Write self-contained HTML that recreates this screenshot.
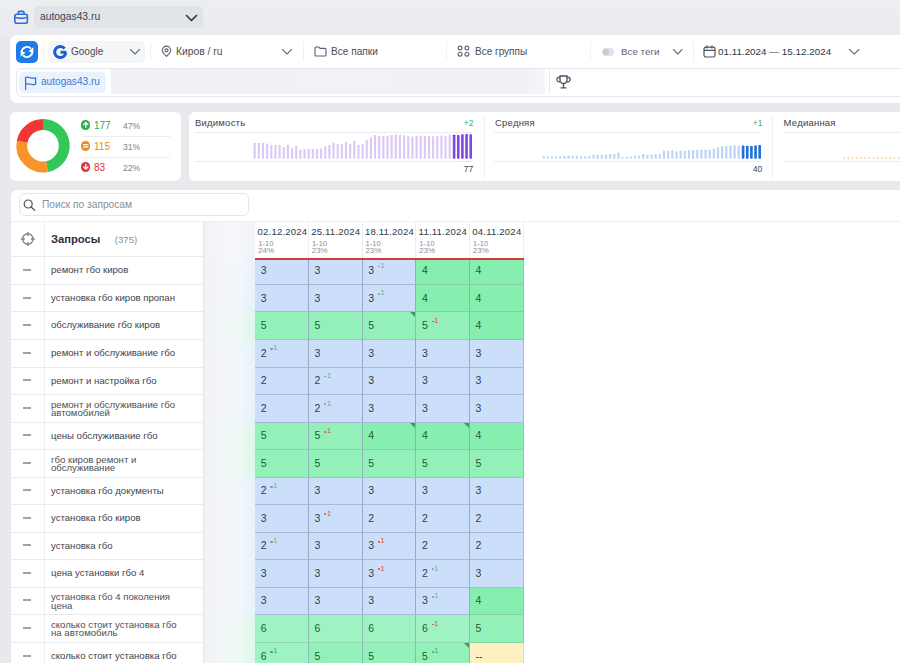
<!DOCTYPE html><html><head><meta charset="utf-8"><style>
*{margin:0;padding:0;box-sizing:border-box}
html,body{width:900px;height:663px;overflow:hidden;background:#e7e9ed;font-family:"Liberation Sans",sans-serif;color:#3c4350}
.a{position:absolute}
.t{position:absolute;white-space:nowrap;line-height:1}
svg{position:absolute;overflow:visible}
</style></head><body><div class="a" style="left:0;top:0;width:900px;height:36px;background:linear-gradient(180deg,#eceef1,#e9ebee)"></div>
<svg style="left:13px;top:10px" width="16" height="15" viewBox="0 0 16 15"><rect x="1.8" y="4.3" width="12.6" height="9.0" rx="2" fill="none" stroke="#2f6fdc" stroke-width="1.6"/><path d="M5.3 4.2 V2.4 Q5.3 1.4 6.3 1.4 H10 Q11 1.4 11 2.4 V4.2" fill="none" stroke="#2f6fdc" stroke-width="1.6"/><path d="M2 7.6 Q8.1 9.2 14.2 7.6" fill="none" stroke="#2f6fdc" stroke-width="1.6"/></svg>
<div class="a" style="left:34px;top:6px;width:169px;height:22px;background:#e0e3e8;border-radius:5px"></div>
<div class="t" style="left:40px;top:11.68px;font-size:10.3px;color:#3d4450;font-weight:normal;">autogas43.ru</div>
<svg style="left:186px;top:14.5px" width="11" height="6" viewBox="0 0 11 6"><path d="M0.5 0.5 L5.5 5.5 L10.5 0.5" fill="none" stroke="#2d3440" stroke-width="1.6" stroke-linecap="round" stroke-linejoin="round"/></svg>
<div class="a" style="left:10px;top:35px;width:900px;height:67.5px;background:#ffffff;border-radius:7px"></div>
<div class="a" style="left:16px;top:40.5px;width:22px;height:22px;background:#1f7bea;border-radius:5px"></div>
<svg style="left:16px;top:40.5px" width="22" height="22" viewBox="0 0 22 22"><path d="M5.6 11.2 A5.4 5.4 0 0 1 14.9 7.6" fill="none" stroke="#fff" stroke-width="1.9"/><path d="M12.4 10.4 L17.4 6.2 L17.2 11.4 Z" fill="#fff"/><path d="M16.4 10.8 A5.4 5.4 0 0 1 7.1 14.4" fill="none" stroke="#fff" stroke-width="1.9"/><path d="M9.6 11.6 L4.6 15.8 L4.8 10.6 Z" fill="#fff"/></svg>
<div class="a" style="left:43px;top:42px;width:1px;height:19px;background:#f0f1f4;"></div>
<div class="a" style="left:150px;top:42px;width:1px;height:19px;background:#f0f1f4;"></div>
<div class="a" style="left:303px;top:42px;width:1px;height:19px;background:#f0f1f4;"></div>
<div class="a" style="left:446px;top:42px;width:1px;height:19px;background:#f0f1f4;"></div>
<div class="a" style="left:590px;top:42px;width:1px;height:19px;background:#f0f1f4;"></div>
<div class="a" style="left:693px;top:42px;width:1px;height:19px;background:#f0f1f4;"></div>
<div class="a" style="left:48px;top:41px;width:97px;height:21.5px;background:#f4f5f7;border-radius:6px"></div>
<svg style="left:53px;top:44.5px" width="14.5" height="14.5" viewBox="0 0 14 14"><path d="M11.2 3.3 A5.4 5.4 0 1 0 12.4 7.4" fill="none" stroke="#1a5fd0" stroke-width="2.9"/><path d="M7.2 7 H12.9" fill="none" stroke="#1a5fd0" stroke-width="2.8"/></svg>
<div class="t" style="left:71px;top:46.95px;font-size:10px;color:#474d56;font-weight:normal;">Google</div>
<svg style="left:130px;top:49px" width="10" height="5.5" viewBox="0 0 10 5.5"><path d="M0.5 0.5 L5.0 5.0 L9.5 0.5" fill="none" stroke="#6b7280" stroke-width="1.1" stroke-linecap="round" stroke-linejoin="round"/></svg>
<svg style="left:161px;top:45.5px" width="11" height="11" viewBox="0 0 11 11"><path d="M5.5 10.4 C5.5 10.4 1.3 6.6 1.3 4.3 A4.2 4.2 0 0 1 9.7 4.3 C9.7 6.6 5.5 10.4 5.5 10.4 Z" fill="none" stroke="#5a6270" stroke-width="1.1"/><circle cx="5.5" cy="4.4" r="1.5" fill="none" stroke="#5a6270" stroke-width="1.1"/></svg>
<div class="t" style="left:176px;top:46.68px;font-size:10.3px;color:#474d56;font-weight:normal;">Киров / ru</div>
<svg style="left:282px;top:49px" width="10" height="5.5" viewBox="0 0 10 5.5"><path d="M0.5 0.5 L5.0 5.0 L9.5 0.5" fill="none" stroke="#6b7280" stroke-width="1.1" stroke-linecap="round" stroke-linejoin="round"/></svg>
<svg style="left:313.5px;top:45.5px" width="13" height="11" viewBox="0 0 13 11"><path d="M1 2 Q1 1 2 1 H4.8 L6.2 2.4 H11 Q12 2.4 12 3.4 V9 Q12 10 11 10 H2 Q1 10 1 9 Z" fill="none" stroke="#5a6270" stroke-width="1.1"/></svg>
<div class="t" style="left:331px;top:46.86px;font-size:10.1px;color:#474d56;font-weight:normal;">Все папки</div>
<svg style="left:456.5px;top:44.5px" width="13" height="12" viewBox="0 0 13 12"><circle cx="3.1" cy="3.1" r="1.95" fill="none" stroke="#5a6270" stroke-width="1.1"/><circle cx="9.9" cy="3.1" r="1.95" fill="none" stroke="#5a6270" stroke-width="1.1"/><circle cx="3.1" cy="9.2" r="1.95" fill="none" stroke="#5a6270" stroke-width="1.1"/><circle cx="9.9" cy="9.2" r="1.95" fill="none" stroke="#5a6270" stroke-width="1.1"/></svg>
<div class="t" style="left:475px;top:46.95px;font-size:10px;color:#474d56;font-weight:normal;">Все группы</div>
<div class="a" style="left:602px;top:48px;width:12px;height:8px;background:#dfe1e5;border-radius:4px"></div>
<div class="a" style="left:603px;top:49px;width:6px;height:6px;border-radius:3px;background:#c9ccd2"></div>
<div class="t" style="left:621px;top:47.13px;font-size:9.8px;color:#5d6470;font-weight:normal;">Все теги</div>
<svg style="left:673px;top:49px" width="9.5" height="5.5" viewBox="0 0 9.5 5.5"><path d="M0.5 0.5 L4.75 5.0 L9.0 0.5" fill="none" stroke="#6b7280" stroke-width="1.1" stroke-linecap="round" stroke-linejoin="round"/></svg>
<svg style="left:702.5px;top:44.5px" width="13" height="13" viewBox="0 0 13 13"><rect x="1" y="2.2" width="11" height="9.8" rx="1.8" fill="none" stroke="#4a5260" stroke-width="1.2"/><path d="M1 5.4 H12 M4 0.6 V3.4 M9 0.6 V3.4" stroke="#4a5260" stroke-width="1.2" fill="none"/></svg>
<div class="t" style="left:718px;top:47.09px;font-size:9.85px;color:#2f3642;font-weight:normal;">01.11.2024 — 15.12.2024</div>
<svg style="left:849px;top:49px" width="10.5" height="5.5" viewBox="0 0 10.5 5.5"><path d="M0.5 0.5 L5.25 5.0 L10.0 0.5" fill="none" stroke="#6b7280" stroke-width="1.1" stroke-linecap="round" stroke-linejoin="round"/></svg>
<div class="a" style="left:16px;top:68px;width:900px;height:28.5px;border:1px solid #e4e7eb;border-radius:6px"></div>
<div class="a" style="left:19px;top:71.5px;width:87px;height:21px;background:#eaf2fd;border-radius:5px"></div>
<svg style="left:23.5px;top:75.5px" width="13" height="14" viewBox="0 0 13 14"><path d="M1.6 13.4 V1.6 C4.6 -0.2 7.6 3.6 11.6 1.8 V8.2 C7.6 10 4.6 6.6 1.6 8.2" fill="none" stroke="#3d78d8" stroke-width="1.3" stroke-linejoin="round" stroke-linecap="round"/></svg>
<div class="t" style="left:41px;top:76.86px;font-size:10.1px;color:#3b78dc;font-weight:normal;">autogas43.ru</div>
<div class="a" style="left:111px;top:69px;width:434px;height:24.5px;background:linear-gradient(90deg,#eef0f3,#f1f2f5 50%,#eff1f4 95%,#f6f7f9)"></div>
<div class="a" style="left:549px;top:70px;width:1px;height:24px;background:#e6e8ec;"></div>
<svg style="left:555.8px;top:74.6px" width="15" height="14" viewBox="0 0 15 14"><path d="M4 1 H11 V5 A3.5 3.5 0 0 1 4 5 Z" fill="none" stroke="#4a5260" stroke-width="1.3"/><path d="M4 2.4 H2.2 A2 2 0 0 0 4.2 6.6 M11 2.4 H12.8 A2 2 0 0 1 10.8 6.6" fill="none" stroke="#4a5260" stroke-width="1.2"/><path d="M7.5 8.5 V12.5 M4.5 12.8 H10.5" stroke="#4a5260" stroke-width="1.3" fill="none"/></svg>
<div class="a" style="left:10px;top:112px;width:170.5px;height:69px;background:#ffffff;border-radius:6px"></div>
<svg style="left:0;top:0" width="900" height="663"><path d="M43.00 124.45 A21.25 21.25 0 0 1 46.98 166.57" fill="none" stroke="#34c658" stroke-width="10.9"/><path d="M46.98 166.57 A21.25 21.25 0 0 1 22.13 141.72" fill="none" stroke="#f8952a" stroke-width="10.9"/><path d="M22.13 141.72 A21.25 21.25 0 0 1 43.00 124.45" fill="none" stroke="#f23636" stroke-width="10.9"/></svg>
<div class="a" style="left:80.8px;top:120.2px;width:9.6px;height:9.6px;border-radius:50%;background:#2faa50"></div>
<svg style="left:80.8px;top:120.2px" width="9.6" height="9.6" viewBox="0 0 10 10"><path d="M5 7.6 V2.8 M2.8 4.8 L5 2.6 L7.2 4.8" fill="none" stroke="#fff" stroke-width="1.4" stroke-linecap="round" stroke-linejoin="round"/></svg>
<div class="t" style="left:94px;top:121.15px;font-size:10px;color:#2faa50;font-weight:normal;">177</div>
<div class="t" style="left:123px;top:122.42px;font-size:8.6px;color:#7d838d;font-weight:normal;">47%</div>
<div class="a" style="left:80.8px;top:141.2px;width:9.6px;height:9.6px;border-radius:50%;background:#ee8c1f"></div>
<svg style="left:80.8px;top:141.2px" width="9.6" height="9.6" viewBox="0 0 10 10"><path d="M2.8 3.9 H7.2 M2.8 6.1 H7.2" fill="none" stroke="#fff" stroke-width="1.3" stroke-linecap="round"/></svg>
<div class="t" style="left:94px;top:142.15px;font-size:10px;color:#ee8c1f;font-weight:normal;">115</div>
<div class="t" style="left:123px;top:143.42px;font-size:8.6px;color:#7d838d;font-weight:normal;">31%</div>
<div class="a" style="left:80.8px;top:162.2px;width:9.6px;height:9.6px;border-radius:50%;background:#e0343a"></div>
<svg style="left:80.8px;top:162.2px" width="9.6" height="9.6" viewBox="0 0 10 10"><path d="M5 2.4 V7.2 M2.8 5.2 L5 7.4 L7.2 5.2" fill="none" stroke="#fff" stroke-width="1.4" stroke-linecap="round" stroke-linejoin="round"/></svg>
<div class="t" style="left:94px;top:163.15px;font-size:10px;color:#e0343a;font-weight:normal;">83</div>
<div class="t" style="left:123px;top:164.42px;font-size:8.6px;color:#7d838d;font-weight:normal;">22%</div>
<div class="a" style="left:82px;top:135.5px;width:88px;height:1px;background:#eaecef;"></div>
<div class="a" style="left:82px;top:157px;width:88px;height:1px;background:#eaecef;"></div>
<div class="a" style="left:189px;top:112px;width:720px;height:69px;background:#ffffff;border-radius:6px"></div>
<div class="t" style="left:195px;top:118.10px;font-size:9.5px;color:#3c4148;font-weight:normal;letter-spacing:0.22px">Видимость</div>
<div class="a" style="left:194px;top:131.5px;width:278.3px;height:1px;background:#e9ebee;"></div>
<div class="a" style="left:194px;top:160.5px;width:278.3px;height:1px;background:#e9ebee;"></div>
<svg style="left:0;top:0" width="900" height="663"><rect x="253.60" y="142.70" width="2.2" height="16" rx="0.6" fill="#dccaf6"/><rect x="257.75" y="142.70" width="2.2" height="16" rx="0.6" fill="#dccaf6"/><rect x="261.90" y="142.70" width="2.2" height="16" rx="0.6" fill="#dccaf6"/><rect x="266.05" y="143.60" width="2.2" height="15.1" rx="0.6" fill="#dccaf6"/><rect x="270.20" y="145.00" width="2.2" height="13.7" rx="0.6" fill="#dccaf6"/><rect x="274.35" y="145.00" width="2.2" height="13.7" rx="0.6" fill="#dccaf6"/><rect x="278.50" y="145.00" width="2.2" height="13.7" rx="0.6" fill="#dccaf6"/><rect x="282.65" y="146.70" width="2.2" height="12" rx="0.6" fill="#dccaf6"/><rect x="286.80" y="144.40" width="2.2" height="14.3" rx="0.6" fill="#dccaf6"/><rect x="290.95" y="147.40" width="2.2" height="11.3" rx="0.6" fill="#dccaf6"/><rect x="295.10" y="145.40" width="2.2" height="13.3" rx="0.6" fill="#dccaf6"/><rect x="299.25" y="149.70" width="2.2" height="9" rx="0.6" fill="#dccaf6"/><rect x="303.40" y="149.00" width="2.2" height="9.7" rx="0.6" fill="#dccaf6"/><rect x="307.55" y="148.70" width="2.2" height="10" rx="0.6" fill="#dccaf6"/><rect x="311.70" y="148.70" width="2.2" height="10" rx="0.6" fill="#dccaf6"/><rect x="315.85" y="148.70" width="2.2" height="10" rx="0.6" fill="#dccaf6"/><rect x="320.00" y="148.40" width="2.2" height="10.3" rx="0.6" fill="#dccaf6"/><rect x="324.15" y="146.30" width="2.2" height="12.4" rx="0.6" fill="#dccaf6"/><rect x="328.30" y="145.00" width="2.2" height="13.7" rx="0.6" fill="#dccaf6"/><rect x="332.45" y="142.30" width="2.2" height="16.4" rx="0.6" fill="#dccaf6"/><rect x="336.60" y="144.00" width="2.2" height="14.7" rx="0.6" fill="#dccaf6"/><rect x="340.75" y="143.40" width="2.2" height="15.3" rx="0.6" fill="#dccaf6"/><rect x="344.90" y="142.00" width="2.2" height="16.7" rx="0.6" fill="#dccaf6"/><rect x="349.05" y="143.70" width="2.2" height="15" rx="0.6" fill="#dccaf6"/><rect x="353.20" y="140.70" width="2.2" height="18" rx="0.6" fill="#dccaf6"/><rect x="357.35" y="145.00" width="2.2" height="13.7" rx="0.6" fill="#dccaf6"/><rect x="361.50" y="144.00" width="2.2" height="14.7" rx="0.6" fill="#dccaf6"/><rect x="365.65" y="139.70" width="2.2" height="19" rx="0.6" fill="#dccaf6"/><rect x="369.80" y="137.40" width="2.2" height="21.3" rx="0.6" fill="#dccaf6"/><rect x="373.95" y="135.10" width="2.2" height="23.6" rx="0.6" fill="#dccaf6"/><rect x="378.10" y="136.00" width="2.2" height="22.7" rx="0.6" fill="#dccaf6"/><rect x="382.25" y="136.00" width="2.2" height="22.7" rx="0.6" fill="#dccaf6"/><rect x="386.40" y="135.70" width="2.2" height="23" rx="0.6" fill="#dccaf6"/><rect x="390.55" y="135.10" width="2.2" height="23.6" rx="0.6" fill="#dccaf6"/><rect x="394.70" y="134.40" width="2.2" height="24.3" rx="0.6" fill="#dccaf6"/><rect x="398.85" y="134.70" width="2.2" height="24" rx="0.6" fill="#dccaf6"/><rect x="403.00" y="135.10" width="2.2" height="23.6" rx="0.6" fill="#dccaf6"/><rect x="407.15" y="136.00" width="2.2" height="22.7" rx="0.6" fill="#dccaf6"/><rect x="411.30" y="136.40" width="2.2" height="22.3" rx="0.6" fill="#dccaf6"/><rect x="415.45" y="136.00" width="2.2" height="22.7" rx="0.6" fill="#dccaf6"/><rect x="419.60" y="135.40" width="2.2" height="23.3" rx="0.6" fill="#dccaf6"/><rect x="423.75" y="136.00" width="2.2" height="22.7" rx="0.6" fill="#dccaf6"/><rect x="427.90" y="136.00" width="2.2" height="22.7" rx="0.6" fill="#dccaf6"/><rect x="432.05" y="136.30" width="2.2" height="22.4" rx="0.6" fill="#dccaf6"/><rect x="436.20" y="136.00" width="2.2" height="22.7" rx="0.6" fill="#dccaf6"/><rect x="440.35" y="135.40" width="2.2" height="23.3" rx="0.6" fill="#dccaf6"/><rect x="444.50" y="136.00" width="2.2" height="22.7" rx="0.6" fill="#dccaf6"/><rect x="448.65" y="134.40" width="2.2" height="24.3" rx="0.6" fill="#dccaf6"/><rect x="452.80" y="134.70" width="2.6" height="24" rx="0.6" fill="#8045e3"/><rect x="456.95" y="135.10" width="2.6" height="23.6" rx="0.6" fill="#8045e3"/><rect x="461.10" y="134.30" width="2.6" height="24.4" rx="0.6" fill="#8045e3"/><rect x="465.25" y="134.00" width="2.6" height="24.7" rx="0.6" fill="#8045e3"/><rect x="469.40" y="134.30" width="2.6" height="24.4" rx="0.6" fill="#8045e3"/></svg>
<div class="t" style="left:463.7px;top:118.71px;font-size:8.5px;color:#3bb561;font-weight:normal;">+2</div>
<div class="t" style="left:463.7px;top:165.02px;font-size:8.6px;color:#3c4350;font-weight:normal;">77</div>
<div class="a" style="left:483.5px;top:115px;width:1px;height:63px;background:#eceef1;"></div>
<div class="t" style="left:495px;top:118.10px;font-size:9.5px;color:#3c4148;font-weight:normal;letter-spacing:0.22px">Средняя</div>
<div class="a" style="left:494px;top:131.5px;width:267.29999999999995px;height:1px;background:#e9ebee;"></div>
<div class="a" style="left:494px;top:160.5px;width:267.29999999999995px;height:1px;background:#e9ebee;"></div>
<svg style="left:0;top:0" width="900" height="663"><rect x="542.60" y="156.20" width="2.2" height="2.5" rx="0.6" fill="#bdd5f5"/><rect x="546.75" y="156.20" width="2.2" height="2.5" rx="0.6" fill="#bdd5f5"/><rect x="550.90" y="156.20" width="2.2" height="2.5" rx="0.6" fill="#bdd5f5"/><rect x="555.05" y="156.20" width="2.2" height="2.5" rx="0.6" fill="#bdd5f5"/><rect x="559.20" y="156.20" width="2.2" height="2.5" rx="0.6" fill="#bdd5f5"/><rect x="563.35" y="155.70" width="2.2" height="3" rx="0.6" fill="#bdd5f5"/><rect x="567.50" y="155.70" width="2.2" height="3" rx="0.6" fill="#bdd5f5"/><rect x="571.65" y="155.70" width="2.2" height="3" rx="0.6" fill="#bdd5f5"/><rect x="575.80" y="155.70" width="2.2" height="3" rx="0.6" fill="#bdd5f5"/><rect x="579.95" y="156.20" width="2.2" height="2.5" rx="0.6" fill="#bdd5f5"/><rect x="584.10" y="156.20" width="2.2" height="2.5" rx="0.6" fill="#bdd5f5"/><rect x="588.25" y="156.20" width="2.2" height="2.5" rx="0.6" fill="#bdd5f5"/><rect x="592.40" y="154.70" width="2.2" height="4" rx="0.6" fill="#bdd5f5"/><rect x="596.55" y="154.70" width="2.2" height="4" rx="0.6" fill="#bdd5f5"/><rect x="600.70" y="154.70" width="2.2" height="4" rx="0.6" fill="#bdd5f5"/><rect x="604.85" y="154.70" width="2.2" height="4" rx="0.6" fill="#bdd5f5"/><rect x="609.00" y="154.00" width="2.2" height="4.7" rx="0.6" fill="#bdd5f5"/><rect x="613.15" y="154.00" width="2.2" height="4.7" rx="0.6" fill="#bdd5f5"/><rect x="617.30" y="152.70" width="2.2" height="6" rx="0.6" fill="#bdd5f5"/><rect x="621.45" y="156.70" width="2.2" height="2" rx="0.6" fill="#bdd5f5"/><rect x="625.60" y="156.70" width="2.2" height="2" rx="0.6" fill="#bdd5f5"/><rect x="629.75" y="156.40" width="2.2" height="2.3" rx="0.6" fill="#bdd5f5"/><rect x="633.90" y="155.40" width="2.2" height="3.3" rx="0.6" fill="#bdd5f5"/><rect x="638.05" y="155.40" width="2.2" height="3.3" rx="0.6" fill="#bdd5f5"/><rect x="642.20" y="154.00" width="2.2" height="4.7" rx="0.6" fill="#bdd5f5"/><rect x="646.35" y="154.70" width="2.2" height="4" rx="0.6" fill="#bdd5f5"/><rect x="650.50" y="154.70" width="2.2" height="4" rx="0.6" fill="#bdd5f5"/><rect x="654.65" y="154.00" width="2.2" height="4.7" rx="0.6" fill="#bdd5f5"/><rect x="658.80" y="154.00" width="2.2" height="4.7" rx="0.6" fill="#bdd5f5"/><rect x="662.95" y="150.30" width="2.2" height="8.4" rx="0.6" fill="#bdd5f5"/><rect x="667.10" y="150.70" width="2.2" height="8" rx="0.6" fill="#bdd5f5"/><rect x="671.25" y="150.30" width="2.2" height="8.4" rx="0.6" fill="#bdd5f5"/><rect x="675.40" y="151.40" width="2.2" height="7.3" rx="0.6" fill="#bdd5f5"/><rect x="679.55" y="150.70" width="2.2" height="8" rx="0.6" fill="#bdd5f5"/><rect x="683.70" y="150.70" width="2.2" height="8" rx="0.6" fill="#bdd5f5"/><rect x="687.85" y="150.00" width="2.2" height="8.7" rx="0.6" fill="#bdd5f5"/><rect x="692.00" y="150.00" width="2.2" height="8.7" rx="0.6" fill="#bdd5f5"/><rect x="696.15" y="149.70" width="2.2" height="9" rx="0.6" fill="#bdd5f5"/><rect x="700.30" y="149.40" width="2.2" height="9.3" rx="0.6" fill="#bdd5f5"/><rect x="704.45" y="149.70" width="2.2" height="9" rx="0.6" fill="#bdd5f5"/><rect x="708.60" y="149.40" width="2.2" height="9.3" rx="0.6" fill="#bdd5f5"/><rect x="712.75" y="148.70" width="2.2" height="10" rx="0.6" fill="#bdd5f5"/><rect x="716.90" y="147.40" width="2.2" height="11.3" rx="0.6" fill="#bdd5f5"/><rect x="721.05" y="146.00" width="2.2" height="12.7" rx="0.6" fill="#bdd5f5"/><rect x="725.20" y="146.00" width="2.2" height="12.7" rx="0.6" fill="#bdd5f5"/><rect x="729.35" y="145.70" width="2.2" height="13" rx="0.6" fill="#bdd5f5"/><rect x="733.50" y="145.00" width="2.2" height="13.7" rx="0.6" fill="#bdd5f5"/><rect x="737.65" y="145.40" width="2.2" height="13.3" rx="0.6" fill="#bdd5f5"/><rect x="741.80" y="145.40" width="2.6" height="13.3" rx="0.6" fill="#1f6fdc"/><rect x="745.95" y="145.70" width="2.6" height="13" rx="0.6" fill="#1f6fdc"/><rect x="750.10" y="146.00" width="2.6" height="12.7" rx="0.6" fill="#1f6fdc"/><rect x="754.25" y="145.40" width="2.6" height="13.3" rx="0.6" fill="#1f6fdc"/><rect x="758.40" y="145.00" width="2.6" height="13.7" rx="0.6" fill="#1f6fdc"/></svg>
<div class="t" style="left:752.6999999999999px;top:118.71px;font-size:8.5px;color:#3bb561;font-weight:normal;">+1</div>
<div class="t" style="left:752.6999999999999px;top:165.02px;font-size:8.6px;color:#3c4350;font-weight:normal;">40</div>
<div class="a" style="left:771.5px;top:115px;width:1px;height:63px;background:#eceef1;"></div>
<div class="t" style="left:783.6px;top:118.10px;font-size:9.5px;color:#3c4148;font-weight:normal;letter-spacing:0.22px">Медианная</div>
<div class="a" style="left:783px;top:131.5px;width:117px;height:1px;background:#e9ebee;"></div>
<div class="a" style="left:783px;top:160.5px;width:117px;height:1px;background:#e9ebee;"></div>
<svg style="left:0;top:0" width="900" height="663"><rect x="843.20" y="157.2" width="1.8" height="1.5" fill="#f9cfa0"/><rect x="847.40" y="157.2" width="1.8" height="1.5" fill="#f9cfa0"/><rect x="851.60" y="157.2" width="1.8" height="1.5" fill="#f9cfa0"/><rect x="855.80" y="157.2" width="1.8" height="1.5" fill="#f9cfa0"/><rect x="860.00" y="157.2" width="1.8" height="1.5" fill="#f9cfa0"/><rect x="864.20" y="157.2" width="1.8" height="1.5" fill="#f9cfa0"/><rect x="868.40" y="157.2" width="1.8" height="1.5" fill="#f9cfa0"/><rect x="872.60" y="157.2" width="1.8" height="1.5" fill="#f9cfa0"/><rect x="876.80" y="157.2" width="1.8" height="1.5" fill="#f9cfa0"/><rect x="881.00" y="157.2" width="1.8" height="1.5" fill="#f9cfa0"/><rect x="885.20" y="157.2" width="1.8" height="1.5" fill="#f9cfa0"/><rect x="889.40" y="157.2" width="1.8" height="1.5" fill="#f9cfa0"/><rect x="893.60" y="157.2" width="1.8" height="1.5" fill="#f9cfa0"/><rect x="897.80" y="157.2" width="1.8" height="1.5" fill="#f9cfa0"/></svg>
<div class="a" style="left:10.5px;top:190px;width:900px;height:480px;background:#ffffff;border-radius:6px"></div>
<div class="a" style="left:19.4px;top:193.3px;width:229.6px;height:22.4px;border:1px solid #e3e6ea;border-radius:6px"></div>
<svg style="left:23.4px;top:198.8px" width="13" height="12" viewBox="0 0 13 12"><circle cx="5.2" cy="5" r="4" fill="none" stroke="#4a5260" stroke-width="1.2"/><path d="M8.2 8 L11.8 11.4" stroke="#4a5260" stroke-width="1.3" stroke-linecap="round"/></svg>
<div class="t" style="left:42px;top:200.07px;font-size:10.2px;color:#8a909a;font-weight:normal;">Поиск по запросам</div>
<div class="a" style="left:11px;top:221px;width:900px;height:1px;background:#eceef1;"></div>
<div class="a" style="left:44px;top:221px;width:1px;height:450px;background:#eceef1;"></div>
<div class="a" style="left:203px;top:221px;width:1px;height:450px;background:#e3e6ea;"></div>
<svg style="left:20px;top:231px" width="16" height="16" viewBox="0 0 16 16"><circle cx="7.8" cy="8" r="5.2" fill="none" stroke="#7d8591" stroke-width="1.4"/><path d="M7.8 1 V5 M7.8 11 V15 M0.8 8 H4.8 M10.8 8 H14.8" stroke="#7d8591" stroke-width="1.4"/></svg>
<div class="t" style="left:51px;top:234.06px;font-size:11.2px;color:#2c323c;font-weight:bold;">Запросы</div>
<div class="t" style="left:114.8px;top:235.31px;font-size:9.6px;color:#8a909a;font-weight:normal;">(375)</div>
<div class="t" style="left:257.5px;top:227.01px;font-size:9.6px;color:#333a45;font-weight:normal;letter-spacing:0.18px">02.12.2024</div>
<div class="t" style="left:258.2px;top:240.32px;font-size:7.6px;color:#8a909a;font-weight:normal;">1-10</div>
<div class="t" style="left:258.0px;top:246.86px;font-size:8px;color:#8a909a;font-weight:normal;">24%</div>
<div class="a" style="left:308.0px;top:221.5px;width:1px;height:36px;background:#eceef1;"></div>
<div class="t" style="left:311.2px;top:227.01px;font-size:9.6px;color:#333a45;font-weight:normal;letter-spacing:0.18px">25.11.2024</div>
<div class="t" style="left:311.9px;top:240.32px;font-size:7.6px;color:#8a909a;font-weight:normal;">1-10</div>
<div class="t" style="left:311.7px;top:246.86px;font-size:8px;color:#8a909a;font-weight:normal;">23%</div>
<div class="a" style="left:361.7px;top:221.5px;width:1px;height:36px;background:#eceef1;"></div>
<div class="t" style="left:364.90000000000003px;top:227.01px;font-size:9.6px;color:#333a45;font-weight:normal;letter-spacing:0.18px">18.11.2024</div>
<div class="t" style="left:365.6px;top:240.32px;font-size:7.6px;color:#8a909a;font-weight:normal;">1-10</div>
<div class="t" style="left:365.40000000000003px;top:246.86px;font-size:8px;color:#8a909a;font-weight:normal;">23%</div>
<div class="a" style="left:415.40000000000003px;top:221.5px;width:1px;height:36px;background:#eceef1;"></div>
<div class="t" style="left:418.6px;top:227.01px;font-size:9.6px;color:#333a45;font-weight:normal;letter-spacing:0.18px">11.11.2024</div>
<div class="t" style="left:419.3px;top:240.32px;font-size:7.6px;color:#8a909a;font-weight:normal;">1-10</div>
<div class="t" style="left:419.1px;top:246.86px;font-size:8px;color:#8a909a;font-weight:normal;">23%</div>
<div class="a" style="left:469.1px;top:221.5px;width:1px;height:36px;background:#eceef1;"></div>
<div class="t" style="left:472.3px;top:227.01px;font-size:9.6px;color:#333a45;font-weight:normal;letter-spacing:0.18px">04.11.2024</div>
<div class="t" style="left:473.0px;top:240.32px;font-size:7.6px;color:#8a909a;font-weight:normal;">1-10</div>
<div class="t" style="left:472.8px;top:246.86px;font-size:8px;color:#8a909a;font-weight:normal;">23%</div>
<div class="a" style="left:522.8000000000001px;top:221.5px;width:1px;height:36px;background:#eceef1;"></div>
<div class="a" style="left:255.3px;top:257.5px;width:268.5px;height:2.5px;background:#d43a3a;"></div>
<div class="a" style="left:11px;top:256.4px;width:192px;height:1px;background:#e9ebee;"></div>
<div class="a" style="left:23px;top:269px;width:8px;height:2px;background:#9fa4ab;"></div>
<div class="t" style="left:51px;top:265.41px;font-size:9.6px;color:#3c4350;font-weight:normal;">ремонт гбо киров</div>
<div class="a" style="left:255.30px;top:260.00px;width:53.70px;height:24.94px;background:#cbdffa;border-right:1px solid #98a9c8;border-bottom:1px solid #a9b9d6"></div>
<div class="t" style="left:260.8px;top:265.00px;font-size:10.5px;color:#323c4c;font-weight:normal;">3</div>
<div class="a" style="left:309.00px;top:260.00px;width:53.70px;height:24.94px;background:#cbdffa;border-right:1px solid #98a9c8;border-bottom:1px solid #a9b9d6"></div>
<div class="t" style="left:314.5px;top:265.00px;font-size:10.5px;color:#323c4c;font-weight:normal;">3</div>
<div class="a" style="left:362.70px;top:260.00px;width:53.70px;height:24.94px;background:#cbdffa;border-right:1px solid #98a9c8;border-bottom:1px solid #a9b9d6"></div>
<div class="t" style="left:368.20000000000005px;top:265.00px;font-size:10.5px;color:#323c4c;font-weight:normal;">3</div>
<div class="t" style="left:380.6px;top:261.80px;font-size:7.4px;color:#6aa98a;font-weight:normal;">1</div>
<div class="a" style="left:377.80px;top:265.50px;width:2.2px;height:1.8px;border-radius:1px;background:#6aa98a"></div>
<div class="a" style="left:416.40px;top:260.00px;width:53.70px;height:24.94px;background:#86eeae;border-right:1px solid #88b5b2;border-bottom:1px solid #84cfa4"></div>
<div class="t" style="left:421.90000000000003px;top:265.00px;font-size:10.5px;color:#1b5e37;font-weight:normal;">4</div>
<div class="a" style="left:470.10px;top:260.00px;width:53.70px;height:24.94px;background:#86eeae;border-right:1px solid #84cfa4;border-bottom:1px solid #84cfa4"></div>
<div class="t" style="left:475.6px;top:265.00px;font-size:10.5px;color:#1b5e37;font-weight:normal;">4</div>
<div class="a" style="left:11px;top:283.94px;width:192px;height:1px;background:#e9ebee;"></div>
<div class="a" style="left:23px;top:297px;width:8px;height:2px;background:#9fa4ab;"></div>
<div class="t" style="left:51px;top:292.95px;font-size:9.6px;color:#3c4350;font-weight:normal;">установка гбо киров пропан</div>
<div class="a" style="left:255.30px;top:284.94px;width:53.70px;height:27.54px;background:#cbdffa;border-right:1px solid #98a9c8;border-bottom:1px solid #a9b9d6"></div>
<div class="t" style="left:260.8px;top:292.54px;font-size:10.5px;color:#323c4c;font-weight:normal;">3</div>
<div class="a" style="left:309.00px;top:284.94px;width:53.70px;height:27.54px;background:#cbdffa;border-right:1px solid #98a9c8;border-bottom:1px solid #a9b9d6"></div>
<div class="t" style="left:314.5px;top:292.54px;font-size:10.5px;color:#323c4c;font-weight:normal;">3</div>
<div class="a" style="left:362.70px;top:284.94px;width:53.70px;height:27.54px;background:#cbdffa;border-right:1px solid #98a9c8;border-bottom:1px solid #a9b9d6"></div>
<div class="t" style="left:368.20000000000005px;top:292.54px;font-size:10.5px;color:#323c4c;font-weight:normal;">3</div>
<div class="t" style="left:380.6px;top:289.34px;font-size:7.4px;color:#6aa98a;font-weight:normal;">1</div>
<div class="a" style="left:377.80px;top:293.04px;width:2.2px;height:1.8px;border-radius:1px;background:#6aa98a"></div>
<div class="a" style="left:416.40px;top:284.94px;width:53.70px;height:27.54px;background:#86eeae;border-right:1px solid #88b5b2;border-bottom:1px solid #84cfa4"></div>
<div class="t" style="left:421.90000000000003px;top:292.54px;font-size:10.5px;color:#1b5e37;font-weight:normal;">4</div>
<div class="a" style="left:470.10px;top:284.94px;width:53.70px;height:27.54px;background:#86eeae;border-right:1px solid #84cfa4;border-bottom:1px solid #84cfa4"></div>
<div class="t" style="left:475.6px;top:292.54px;font-size:10.5px;color:#1b5e37;font-weight:normal;">4</div>
<div class="a" style="left:11px;top:311.47999999999996px;width:192px;height:1px;background:#e9ebee;"></div>
<div class="a" style="left:23px;top:324px;width:8px;height:2px;background:#9fa4ab;"></div>
<div class="t" style="left:51px;top:320.49px;font-size:9.6px;color:#3c4350;font-weight:normal;">обслуживание гбо киров</div>
<div class="a" style="left:255.30px;top:312.48px;width:53.70px;height:27.54px;background:#93f0b8;border-right:1px solid #8cb8b6;border-bottom:1px solid #89d3a9"></div>
<div class="t" style="left:260.8px;top:320.08px;font-size:10.5px;color:#1b5e37;font-weight:normal;">5</div>
<div class="a" style="left:309.00px;top:312.48px;width:53.70px;height:27.54px;background:#93f0b8;border-right:1px solid #8cb8b6;border-bottom:1px solid #89d3a9"></div>
<div class="t" style="left:314.5px;top:320.08px;font-size:10.5px;color:#1b5e37;font-weight:normal;">5</div>
<div class="a" style="left:362.70px;top:312.48px;width:53.70px;height:27.54px;background:#93f0b8;border-right:1px solid #8cb8b6;border-bottom:1px solid #89d3a9"></div>
<div class="t" style="left:368.20000000000005px;top:320.08px;font-size:10.5px;color:#1b5e37;font-weight:normal;">5</div>
<svg style="left:410.40px;top:312.48px" width="5" height="5" viewBox="0 0 5 5"><path d="M0 0 H5 V5 Z" fill="#4d8c6c"/></svg>
<div class="a" style="left:416.40px;top:312.48px;width:53.70px;height:27.54px;background:#93f0b8;border-right:1px solid #8cb8b6;border-bottom:1px solid #89d3a9"></div>
<div class="t" style="left:421.90000000000003px;top:320.08px;font-size:10.5px;color:#1b5e37;font-weight:normal;">5</div>
<div class="t" style="left:434.3px;top:316.88px;font-size:7.4px;color:#e2453f;font-weight:normal;">1</div>
<div class="a" style="left:431.50px;top:320.58px;width:2.2px;height:1.8px;border-radius:1px;background:#e2453f"></div>
<div class="a" style="left:470.10px;top:312.48px;width:53.70px;height:27.54px;background:#86eeae;border-right:1px solid #84cfa4;border-bottom:1px solid #84cfa4"></div>
<div class="t" style="left:475.6px;top:320.08px;font-size:10.5px;color:#1b5e37;font-weight:normal;">4</div>
<div class="a" style="left:11px;top:339.02px;width:192px;height:1px;background:#e9ebee;"></div>
<div class="a" style="left:23px;top:352px;width:8px;height:2px;background:#9fa4ab;"></div>
<div class="t" style="left:51px;top:348.03px;font-size:9.6px;color:#3c4350;font-weight:normal;">ремонт и обслуживание гбо</div>
<div class="a" style="left:255.30px;top:340.02px;width:53.70px;height:27.54px;background:#cbdffa;border-right:1px solid #98a9c8;border-bottom:1px solid #a9b9d6"></div>
<div class="t" style="left:260.8px;top:347.62px;font-size:10.5px;color:#323c4c;font-weight:normal;">2</div>
<div class="t" style="left:273.2px;top:344.42px;font-size:7.4px;color:#6aa98a;font-weight:normal;">1</div>
<div class="a" style="left:270.40px;top:348.12px;width:2.2px;height:1.8px;border-radius:1px;background:#6aa98a"></div>
<div class="a" style="left:309.00px;top:340.02px;width:53.70px;height:27.54px;background:#cbdffa;border-right:1px solid #98a9c8;border-bottom:1px solid #a9b9d6"></div>
<div class="t" style="left:314.5px;top:347.62px;font-size:10.5px;color:#323c4c;font-weight:normal;">3</div>
<div class="a" style="left:362.70px;top:340.02px;width:53.70px;height:27.54px;background:#cbdffa;border-right:1px solid #98a9c8;border-bottom:1px solid #a9b9d6"></div>
<div class="t" style="left:368.20000000000005px;top:347.62px;font-size:10.5px;color:#323c4c;font-weight:normal;">3</div>
<div class="a" style="left:416.40px;top:340.02px;width:53.70px;height:27.54px;background:#cbdffa;border-right:1px solid #98a9c8;border-bottom:1px solid #a9b9d6"></div>
<div class="t" style="left:421.90000000000003px;top:347.62px;font-size:10.5px;color:#323c4c;font-weight:normal;">3</div>
<div class="a" style="left:470.10px;top:340.02px;width:53.70px;height:27.54px;background:#cbdffa;border-right:1px solid #a9b9d6;border-bottom:1px solid #a9b9d6"></div>
<div class="t" style="left:475.6px;top:347.62px;font-size:10.5px;color:#323c4c;font-weight:normal;">3</div>
<div class="a" style="left:11px;top:366.55999999999995px;width:192px;height:1px;background:#e9ebee;"></div>
<div class="a" style="left:23px;top:379px;width:8px;height:2px;background:#9fa4ab;"></div>
<div class="t" style="left:51px;top:375.57px;font-size:9.6px;color:#3c4350;font-weight:normal;">ремонт и настройка гбо</div>
<div class="a" style="left:255.30px;top:367.56px;width:53.70px;height:27.54px;background:#cbdffa;border-right:1px solid #98a9c8;border-bottom:1px solid #a9b9d6"></div>
<div class="t" style="left:260.8px;top:375.16px;font-size:10.5px;color:#323c4c;font-weight:normal;">2</div>
<div class="a" style="left:309.00px;top:367.56px;width:53.70px;height:27.54px;background:#cbdffa;border-right:1px solid #98a9c8;border-bottom:1px solid #a9b9d6"></div>
<div class="t" style="left:314.5px;top:375.16px;font-size:10.5px;color:#323c4c;font-weight:normal;">2</div>
<div class="t" style="left:326.9px;top:371.96px;font-size:7.4px;color:#6aa98a;font-weight:normal;">1</div>
<div class="a" style="left:324.10px;top:375.66px;width:2.2px;height:1.8px;border-radius:1px;background:#6aa98a"></div>
<div class="a" style="left:362.70px;top:367.56px;width:53.70px;height:27.54px;background:#cbdffa;border-right:1px solid #98a9c8;border-bottom:1px solid #a9b9d6"></div>
<div class="t" style="left:368.20000000000005px;top:375.16px;font-size:10.5px;color:#323c4c;font-weight:normal;">3</div>
<div class="a" style="left:416.40px;top:367.56px;width:53.70px;height:27.54px;background:#cbdffa;border-right:1px solid #98a9c8;border-bottom:1px solid #a9b9d6"></div>
<div class="t" style="left:421.90000000000003px;top:375.16px;font-size:10.5px;color:#323c4c;font-weight:normal;">3</div>
<div class="a" style="left:470.10px;top:367.56px;width:53.70px;height:27.54px;background:#cbdffa;border-right:1px solid #a9b9d6;border-bottom:1px solid #a9b9d6"></div>
<div class="t" style="left:475.6px;top:375.16px;font-size:10.5px;color:#323c4c;font-weight:normal;">3</div>
<div class="a" style="left:11px;top:394.09999999999997px;width:192px;height:1px;background:#e9ebee;"></div>
<div class="a" style="left:23px;top:407px;width:8px;height:2px;background:#9fa4ab;"></div>
<div class="t" style="left:51px;top:400.70px;font-size:9.6px;line-height:8.3px;color:#4a5059">ремонт и обслуживание гбо<br>автомобилей</div>
<div class="a" style="left:255.30px;top:395.10px;width:53.70px;height:27.54px;background:#cbdffa;border-right:1px solid #98a9c8;border-bottom:1px solid #a9b9d6"></div>
<div class="t" style="left:260.8px;top:402.70px;font-size:10.5px;color:#323c4c;font-weight:normal;">2</div>
<div class="a" style="left:309.00px;top:395.10px;width:53.70px;height:27.54px;background:#cbdffa;border-right:1px solid #98a9c8;border-bottom:1px solid #a9b9d6"></div>
<div class="t" style="left:314.5px;top:402.70px;font-size:10.5px;color:#323c4c;font-weight:normal;">2</div>
<div class="t" style="left:326.9px;top:399.50px;font-size:7.4px;color:#6aa98a;font-weight:normal;">1</div>
<div class="a" style="left:324.10px;top:403.20px;width:2.2px;height:1.8px;border-radius:1px;background:#6aa98a"></div>
<div class="a" style="left:362.70px;top:395.10px;width:53.70px;height:27.54px;background:#cbdffa;border-right:1px solid #98a9c8;border-bottom:1px solid #a9b9d6"></div>
<div class="t" style="left:368.20000000000005px;top:402.70px;font-size:10.5px;color:#323c4c;font-weight:normal;">3</div>
<div class="a" style="left:416.40px;top:395.10px;width:53.70px;height:27.54px;background:#cbdffa;border-right:1px solid #98a9c8;border-bottom:1px solid #a9b9d6"></div>
<div class="t" style="left:421.90000000000003px;top:402.70px;font-size:10.5px;color:#323c4c;font-weight:normal;">3</div>
<div class="a" style="left:470.10px;top:395.10px;width:53.70px;height:27.54px;background:#cbdffa;border-right:1px solid #a9b9d6;border-bottom:1px solid #a9b9d6"></div>
<div class="t" style="left:475.6px;top:402.70px;font-size:10.5px;color:#323c4c;font-weight:normal;">3</div>
<div class="a" style="left:11px;top:421.64px;width:192px;height:1px;background:#e9ebee;"></div>
<div class="a" style="left:23px;top:434px;width:8px;height:2px;background:#9fa4ab;"></div>
<div class="t" style="left:51px;top:430.65px;font-size:9.6px;color:#3c4350;font-weight:normal;">цены обслуживание гбо</div>
<div class="a" style="left:255.30px;top:422.64px;width:53.70px;height:27.54px;background:#93f0b8;border-right:1px solid #8cb8b6;border-bottom:1px solid #89d3a9"></div>
<div class="t" style="left:260.8px;top:430.24px;font-size:10.5px;color:#1b5e37;font-weight:normal;">5</div>
<div class="a" style="left:309.00px;top:422.64px;width:53.70px;height:27.54px;background:#93f0b8;border-right:1px solid #8cb8b6;border-bottom:1px solid #89d3a9"></div>
<div class="t" style="left:314.5px;top:430.24px;font-size:10.5px;color:#1b5e37;font-weight:normal;">5</div>
<div class="t" style="left:326.9px;top:427.04px;font-size:7.4px;color:#e2453f;font-weight:normal;">1</div>
<div class="a" style="left:324.10px;top:430.74px;width:2.2px;height:1.8px;border-radius:1px;background:#e2453f"></div>
<div class="a" style="left:362.70px;top:422.64px;width:53.70px;height:27.54px;background:#86eeae;border-right:1px solid #88b5b2;border-bottom:1px solid #84cfa4"></div>
<div class="t" style="left:368.20000000000005px;top:430.24px;font-size:10.5px;color:#1b5e37;font-weight:normal;">4</div>
<svg style="left:410.40px;top:422.64px" width="5" height="5" viewBox="0 0 5 5"><path d="M0 0 H5 V5 Z" fill="#4d8c6c"/></svg>
<div class="a" style="left:416.40px;top:422.64px;width:53.70px;height:27.54px;background:#86eeae;border-right:1px solid #88b5b2;border-bottom:1px solid #84cfa4"></div>
<div class="t" style="left:421.90000000000003px;top:430.24px;font-size:10.5px;color:#1b5e37;font-weight:normal;">4</div>
<svg style="left:464.10px;top:422.64px" width="5" height="5" viewBox="0 0 5 5"><path d="M0 0 H5 V5 Z" fill="#4d8c6c"/></svg>
<div class="a" style="left:470.10px;top:422.64px;width:53.70px;height:27.54px;background:#86eeae;border-right:1px solid #84cfa4;border-bottom:1px solid #84cfa4"></div>
<div class="t" style="left:475.6px;top:430.24px;font-size:10.5px;color:#1b5e37;font-weight:normal;">4</div>
<div class="a" style="left:11px;top:449.17999999999995px;width:192px;height:1px;background:#e9ebee;"></div>
<div class="a" style="left:23px;top:462px;width:8px;height:2px;background:#9fa4ab;"></div>
<div class="t" style="left:51px;top:455.78px;font-size:9.6px;line-height:8.3px;color:#4a5059">гбо киров ремонт и<br>обслуживание</div>
<div class="a" style="left:255.30px;top:450.18px;width:53.70px;height:27.54px;background:#93f0b8;border-right:1px solid #8cb8b6;border-bottom:1px solid #89d3a9"></div>
<div class="t" style="left:260.8px;top:457.78px;font-size:10.5px;color:#1b5e37;font-weight:normal;">5</div>
<div class="a" style="left:309.00px;top:450.18px;width:53.70px;height:27.54px;background:#93f0b8;border-right:1px solid #8cb8b6;border-bottom:1px solid #89d3a9"></div>
<div class="t" style="left:314.5px;top:457.78px;font-size:10.5px;color:#1b5e37;font-weight:normal;">5</div>
<div class="a" style="left:362.70px;top:450.18px;width:53.70px;height:27.54px;background:#93f0b8;border-right:1px solid #8cb8b6;border-bottom:1px solid #89d3a9"></div>
<div class="t" style="left:368.20000000000005px;top:457.78px;font-size:10.5px;color:#1b5e37;font-weight:normal;">5</div>
<div class="a" style="left:416.40px;top:450.18px;width:53.70px;height:27.54px;background:#93f0b8;border-right:1px solid #8cb8b6;border-bottom:1px solid #89d3a9"></div>
<div class="t" style="left:421.90000000000003px;top:457.78px;font-size:10.5px;color:#1b5e37;font-weight:normal;">5</div>
<div class="a" style="left:470.10px;top:450.18px;width:53.70px;height:27.54px;background:#93f0b8;border-right:1px solid #89d3a9;border-bottom:1px solid #89d3a9"></div>
<div class="t" style="left:475.6px;top:457.78px;font-size:10.5px;color:#1b5e37;font-weight:normal;">5</div>
<div class="a" style="left:11px;top:476.71999999999997px;width:192px;height:1px;background:#e9ebee;"></div>
<div class="a" style="left:23px;top:489px;width:8px;height:2px;background:#9fa4ab;"></div>
<div class="t" style="left:51px;top:485.73px;font-size:9.6px;color:#3c4350;font-weight:normal;">установка гбо документы</div>
<div class="a" style="left:255.30px;top:477.72px;width:53.70px;height:27.54px;background:#cbdffa;border-right:1px solid #98a9c8;border-bottom:1px solid #a9b9d6"></div>
<div class="t" style="left:260.8px;top:485.32px;font-size:10.5px;color:#323c4c;font-weight:normal;">2</div>
<div class="t" style="left:273.2px;top:482.12px;font-size:7.4px;color:#6aa98a;font-weight:normal;">1</div>
<div class="a" style="left:270.40px;top:485.82px;width:2.2px;height:1.8px;border-radius:1px;background:#6aa98a"></div>
<div class="a" style="left:309.00px;top:477.72px;width:53.70px;height:27.54px;background:#cbdffa;border-right:1px solid #98a9c8;border-bottom:1px solid #a9b9d6"></div>
<div class="t" style="left:314.5px;top:485.32px;font-size:10.5px;color:#323c4c;font-weight:normal;">3</div>
<div class="a" style="left:362.70px;top:477.72px;width:53.70px;height:27.54px;background:#cbdffa;border-right:1px solid #98a9c8;border-bottom:1px solid #a9b9d6"></div>
<div class="t" style="left:368.20000000000005px;top:485.32px;font-size:10.5px;color:#323c4c;font-weight:normal;">3</div>
<div class="a" style="left:416.40px;top:477.72px;width:53.70px;height:27.54px;background:#cbdffa;border-right:1px solid #98a9c8;border-bottom:1px solid #a9b9d6"></div>
<div class="t" style="left:421.90000000000003px;top:485.32px;font-size:10.5px;color:#323c4c;font-weight:normal;">3</div>
<div class="a" style="left:470.10px;top:477.72px;width:53.70px;height:27.54px;background:#cbdffa;border-right:1px solid #a9b9d6;border-bottom:1px solid #a9b9d6"></div>
<div class="t" style="left:475.6px;top:485.32px;font-size:10.5px;color:#323c4c;font-weight:normal;">3</div>
<div class="a" style="left:11px;top:504.26px;width:192px;height:1px;background:#e9ebee;"></div>
<div class="a" style="left:23px;top:517px;width:8px;height:2px;background:#9fa4ab;"></div>
<div class="t" style="left:51px;top:513.27px;font-size:9.6px;color:#3c4350;font-weight:normal;">установка гбо киров</div>
<div class="a" style="left:255.30px;top:505.26px;width:53.70px;height:27.54px;background:#cbdffa;border-right:1px solid #98a9c8;border-bottom:1px solid #a9b9d6"></div>
<div class="t" style="left:260.8px;top:512.86px;font-size:10.5px;color:#323c4c;font-weight:normal;">3</div>
<div class="a" style="left:309.00px;top:505.26px;width:53.70px;height:27.54px;background:#cbdffa;border-right:1px solid #98a9c8;border-bottom:1px solid #a9b9d6"></div>
<div class="t" style="left:314.5px;top:512.86px;font-size:10.5px;color:#323c4c;font-weight:normal;">3</div>
<div class="t" style="left:326.9px;top:509.66px;font-size:7.4px;color:#e2453f;font-weight:normal;">1</div>
<div class="a" style="left:324.10px;top:513.36px;width:2.2px;height:1.8px;border-radius:1px;background:#e2453f"></div>
<div class="a" style="left:362.70px;top:505.26px;width:53.70px;height:27.54px;background:#cbdffa;border-right:1px solid #98a9c8;border-bottom:1px solid #a9b9d6"></div>
<div class="t" style="left:368.20000000000005px;top:512.86px;font-size:10.5px;color:#323c4c;font-weight:normal;">2</div>
<div class="a" style="left:416.40px;top:505.26px;width:53.70px;height:27.54px;background:#cbdffa;border-right:1px solid #98a9c8;border-bottom:1px solid #a9b9d6"></div>
<div class="t" style="left:421.90000000000003px;top:512.86px;font-size:10.5px;color:#323c4c;font-weight:normal;">2</div>
<div class="a" style="left:470.10px;top:505.26px;width:53.70px;height:27.54px;background:#cbdffa;border-right:1px solid #a9b9d6;border-bottom:1px solid #a9b9d6"></div>
<div class="t" style="left:475.6px;top:512.86px;font-size:10.5px;color:#323c4c;font-weight:normal;">2</div>
<div class="a" style="left:11px;top:531.8px;width:192px;height:1px;background:#e9ebee;"></div>
<div class="a" style="left:23px;top:544px;width:8px;height:2px;background:#9fa4ab;"></div>
<div class="t" style="left:51px;top:540.81px;font-size:9.6px;color:#3c4350;font-weight:normal;">установка гбо</div>
<div class="a" style="left:255.30px;top:532.80px;width:53.70px;height:27.54px;background:#cbdffa;border-right:1px solid #98a9c8;border-bottom:1px solid #a9b9d6"></div>
<div class="t" style="left:260.8px;top:540.40px;font-size:10.5px;color:#323c4c;font-weight:normal;">2</div>
<div class="t" style="left:273.2px;top:537.20px;font-size:7.4px;color:#6aa98a;font-weight:normal;">1</div>
<div class="a" style="left:270.40px;top:540.90px;width:2.2px;height:1.8px;border-radius:1px;background:#6aa98a"></div>
<div class="a" style="left:309.00px;top:532.80px;width:53.70px;height:27.54px;background:#cbdffa;border-right:1px solid #98a9c8;border-bottom:1px solid #a9b9d6"></div>
<div class="t" style="left:314.5px;top:540.40px;font-size:10.5px;color:#323c4c;font-weight:normal;">3</div>
<div class="a" style="left:362.70px;top:532.80px;width:53.70px;height:27.54px;background:#cbdffa;border-right:1px solid #98a9c8;border-bottom:1px solid #a9b9d6"></div>
<div class="t" style="left:368.20000000000005px;top:540.40px;font-size:10.5px;color:#323c4c;font-weight:normal;">3</div>
<div class="t" style="left:380.6px;top:537.20px;font-size:7.4px;color:#e2453f;font-weight:normal;">1</div>
<div class="a" style="left:377.80px;top:540.90px;width:2.2px;height:1.8px;border-radius:1px;background:#e2453f"></div>
<div class="a" style="left:416.40px;top:532.80px;width:53.70px;height:27.54px;background:#cbdffa;border-right:1px solid #98a9c8;border-bottom:1px solid #a9b9d6"></div>
<div class="t" style="left:421.90000000000003px;top:540.40px;font-size:10.5px;color:#323c4c;font-weight:normal;">2</div>
<div class="a" style="left:470.10px;top:532.80px;width:53.70px;height:27.54px;background:#cbdffa;border-right:1px solid #a9b9d6;border-bottom:1px solid #a9b9d6"></div>
<div class="t" style="left:475.6px;top:540.40px;font-size:10.5px;color:#323c4c;font-weight:normal;">2</div>
<div class="a" style="left:11px;top:559.3399999999999px;width:192px;height:1px;background:#e9ebee;"></div>
<div class="a" style="left:23px;top:572px;width:8px;height:2px;background:#9fa4ab;"></div>
<div class="t" style="left:51px;top:568.35px;font-size:9.6px;color:#3c4350;font-weight:normal;">цена установки гбо 4</div>
<div class="a" style="left:255.30px;top:560.34px;width:53.70px;height:27.54px;background:#cbdffa;border-right:1px solid #98a9c8;border-bottom:1px solid #a9b9d6"></div>
<div class="t" style="left:260.8px;top:567.94px;font-size:10.5px;color:#323c4c;font-weight:normal;">3</div>
<div class="a" style="left:309.00px;top:560.34px;width:53.70px;height:27.54px;background:#cbdffa;border-right:1px solid #98a9c8;border-bottom:1px solid #a9b9d6"></div>
<div class="t" style="left:314.5px;top:567.94px;font-size:10.5px;color:#323c4c;font-weight:normal;">3</div>
<div class="a" style="left:362.70px;top:560.34px;width:53.70px;height:27.54px;background:#cbdffa;border-right:1px solid #98a9c8;border-bottom:1px solid #a9b9d6"></div>
<div class="t" style="left:368.20000000000005px;top:567.94px;font-size:10.5px;color:#323c4c;font-weight:normal;">3</div>
<div class="t" style="left:380.6px;top:564.74px;font-size:7.4px;color:#e2453f;font-weight:normal;">1</div>
<div class="a" style="left:377.80px;top:568.44px;width:2.2px;height:1.8px;border-radius:1px;background:#e2453f"></div>
<div class="a" style="left:416.40px;top:560.34px;width:53.70px;height:27.54px;background:#cbdffa;border-right:1px solid #98a9c8;border-bottom:1px solid #a9b9d6"></div>
<div class="t" style="left:421.90000000000003px;top:567.94px;font-size:10.5px;color:#323c4c;font-weight:normal;">2</div>
<div class="t" style="left:434.3px;top:564.74px;font-size:7.4px;color:#6aa98a;font-weight:normal;">1</div>
<div class="a" style="left:431.50px;top:568.44px;width:2.2px;height:1.8px;border-radius:1px;background:#6aa98a"></div>
<div class="a" style="left:470.10px;top:560.34px;width:53.70px;height:27.54px;background:#cbdffa;border-right:1px solid #a9b9d6;border-bottom:1px solid #a9b9d6"></div>
<div class="t" style="left:475.6px;top:567.94px;font-size:10.5px;color:#323c4c;font-weight:normal;">3</div>
<div class="a" style="left:11px;top:586.88px;width:192px;height:1px;background:#e9ebee;"></div>
<div class="a" style="left:23px;top:599px;width:8px;height:2px;background:#9fa4ab;"></div>
<div class="t" style="left:51px;top:593.48px;font-size:9.6px;line-height:8.3px;color:#4a5059">установка гбо 4 поколения<br>цена</div>
<div class="a" style="left:255.30px;top:587.88px;width:53.70px;height:27.54px;background:#cbdffa;border-right:1px solid #98a9c8;border-bottom:1px solid #a9b9d6"></div>
<div class="t" style="left:260.8px;top:595.48px;font-size:10.5px;color:#323c4c;font-weight:normal;">3</div>
<div class="a" style="left:309.00px;top:587.88px;width:53.70px;height:27.54px;background:#cbdffa;border-right:1px solid #98a9c8;border-bottom:1px solid #a9b9d6"></div>
<div class="t" style="left:314.5px;top:595.48px;font-size:10.5px;color:#323c4c;font-weight:normal;">3</div>
<div class="a" style="left:362.70px;top:587.88px;width:53.70px;height:27.54px;background:#cbdffa;border-right:1px solid #98a9c8;border-bottom:1px solid #a9b9d6"></div>
<div class="t" style="left:368.20000000000005px;top:595.48px;font-size:10.5px;color:#323c4c;font-weight:normal;">3</div>
<div class="a" style="left:416.40px;top:587.88px;width:53.70px;height:27.54px;background:#cbdffa;border-right:1px solid #98a9c8;border-bottom:1px solid #a9b9d6"></div>
<div class="t" style="left:421.90000000000003px;top:595.48px;font-size:10.5px;color:#323c4c;font-weight:normal;">3</div>
<div class="t" style="left:434.3px;top:592.28px;font-size:7.4px;color:#6aa98a;font-weight:normal;">1</div>
<div class="a" style="left:431.50px;top:595.98px;width:2.2px;height:1.8px;border-radius:1px;background:#6aa98a"></div>
<div class="a" style="left:470.10px;top:587.88px;width:53.70px;height:27.54px;background:#86eeae;border-right:1px solid #84cfa4;border-bottom:1px solid #84cfa4"></div>
<div class="t" style="left:475.6px;top:595.48px;font-size:10.5px;color:#1b5e37;font-weight:normal;">4</div>
<div class="a" style="left:11px;top:614.42px;width:192px;height:1px;background:#e9ebee;"></div>
<div class="a" style="left:23px;top:627px;width:8px;height:2px;background:#9fa4ab;"></div>
<div class="t" style="left:51px;top:621.02px;font-size:9.6px;line-height:8.3px;color:#4a5059">сколько стоит установка гбо<br>на автомобиль</div>
<div class="a" style="left:255.30px;top:615.42px;width:53.70px;height:27.54px;background:#9ff3c3;border-right:1px solid #90bcb8;border-bottom:1px solid #92d8b0"></div>
<div class="t" style="left:260.8px;top:623.02px;font-size:10.5px;color:#1b5e37;font-weight:normal;">6</div>
<div class="a" style="left:309.00px;top:615.42px;width:53.70px;height:27.54px;background:#9ff3c3;border-right:1px solid #90bcb8;border-bottom:1px solid #92d8b0"></div>
<div class="t" style="left:314.5px;top:623.02px;font-size:10.5px;color:#1b5e37;font-weight:normal;">6</div>
<div class="a" style="left:362.70px;top:615.42px;width:53.70px;height:27.54px;background:#9ff3c3;border-right:1px solid #90bcb8;border-bottom:1px solid #92d8b0"></div>
<div class="t" style="left:368.20000000000005px;top:623.02px;font-size:10.5px;color:#1b5e37;font-weight:normal;">6</div>
<div class="a" style="left:416.40px;top:615.42px;width:53.70px;height:27.54px;background:#9ff3c3;border-right:1px solid #90bcb8;border-bottom:1px solid #92d8b0"></div>
<div class="t" style="left:421.90000000000003px;top:623.02px;font-size:10.5px;color:#1b5e37;font-weight:normal;">6</div>
<div class="t" style="left:434.3px;top:619.82px;font-size:7.4px;color:#e2453f;font-weight:normal;">1</div>
<div class="a" style="left:431.50px;top:623.52px;width:2.2px;height:1.8px;border-radius:1px;background:#e2453f"></div>
<div class="a" style="left:470.10px;top:615.42px;width:53.70px;height:27.54px;background:#93f0b8;border-right:1px solid #89d3a9;border-bottom:1px solid #89d3a9"></div>
<div class="t" style="left:475.6px;top:623.02px;font-size:10.5px;color:#1b5e37;font-weight:normal;">5</div>
<div class="a" style="left:11px;top:641.96px;width:192px;height:1px;background:#e9ebee;"></div>
<div class="a" style="left:23px;top:655px;width:8px;height:2px;background:#9fa4ab;"></div>
<div class="t" style="left:51px;top:650.97px;font-size:9.6px;color:#3c4350;font-weight:normal;">сколько стоит установка гбо</div>
<div class="a" style="left:255.30px;top:642.96px;width:53.70px;height:27.54px;background:#9ff3c3;border-right:1px solid #90bcb8;border-bottom:1px solid #92d8b0"></div>
<div class="t" style="left:260.8px;top:650.56px;font-size:10.5px;color:#1b5e37;font-weight:normal;">6</div>
<div class="t" style="left:273.2px;top:647.36px;font-size:7.4px;color:#3aa86a;font-weight:normal;">1</div>
<div class="a" style="left:270.40px;top:651.06px;width:2.2px;height:1.8px;border-radius:1px;background:#3aa86a"></div>
<div class="a" style="left:309.00px;top:642.96px;width:53.70px;height:27.54px;background:#93f0b8;border-right:1px solid #8cb8b6;border-bottom:1px solid #89d3a9"></div>
<div class="t" style="left:314.5px;top:650.56px;font-size:10.5px;color:#1b5e37;font-weight:normal;">5</div>
<div class="a" style="left:362.70px;top:642.96px;width:53.70px;height:27.54px;background:#93f0b8;border-right:1px solid #8cb8b6;border-bottom:1px solid #89d3a9"></div>
<div class="t" style="left:368.20000000000005px;top:650.56px;font-size:10.5px;color:#1b5e37;font-weight:normal;">5</div>
<div class="a" style="left:416.40px;top:642.96px;width:53.70px;height:27.54px;background:#93f0b8;border-right:1px solid #8cb8b6;border-bottom:1px solid #89d3a9"></div>
<div class="t" style="left:421.90000000000003px;top:650.56px;font-size:10.5px;color:#1b5e37;font-weight:normal;">5</div>
<div class="t" style="left:434.3px;top:647.36px;font-size:7.4px;color:#3aa86a;font-weight:normal;">1</div>
<div class="a" style="left:431.50px;top:651.06px;width:2.2px;height:1.8px;border-radius:1px;background:#3aa86a"></div>
<svg style="left:464.10px;top:642.96px" width="5" height="5" viewBox="0 0 5 5"><path d="M0 0 H5 V5 Z" fill="#4d8c6c"/></svg>
<div class="a" style="left:470.10px;top:642.96px;width:53.70px;height:27.54px;background:#fdf0c2;border-right:1px solid #e6d9ae;border-bottom:1px solid #e6d9ae"></div>
<div class="t" style="left:475.6px;top:650.56px;font-size:10.5px;color:#3c3a30;font-weight:normal;">--</div>
<div class="a" style="left:204px;top:222px;width:51px;height:441px;background:linear-gradient(90deg,rgba(240,242,246,1) 0%,rgba(246,247,250,0.95) 35%,rgba(250,251,253,0.82) 70%,rgba(253,253,254,0.6) 100%),linear-gradient(180deg,#dfe4ec 0px,#dfe4ec 28px,#cddff8 47.7px,#cddff8 49.7px,#cddff8 75.2px,#cddff8 77.2px,#a8f0c6 102.8px,#a8f0c6 104.8px,#cddff8 130.3px,#cddff8 132.3px,#cddff8 157.8px,#cddff8 159.8px,#cddff8 185.4px,#cddff8 187.4px,#a8f0c6 212.9px,#a8f0c6 214.9px,#a8f0c6 240.4px,#a8f0c6 242.4px,#cddff8 268.0px,#cddff8 270.0px,#cddff8 295.5px,#cddff8 297.5px,#cddff8 323.1px,#cddff8 325.1px,#cddff8 350.6px,#cddff8 352.6px,#cddff8 378.1px,#cddff8 380.1px,#b0f2cc 405.7px,#b0f2cc 407.7px,#b0f2cc 433.2px,#b0f2cc 435.2px)"></div></body></html>
